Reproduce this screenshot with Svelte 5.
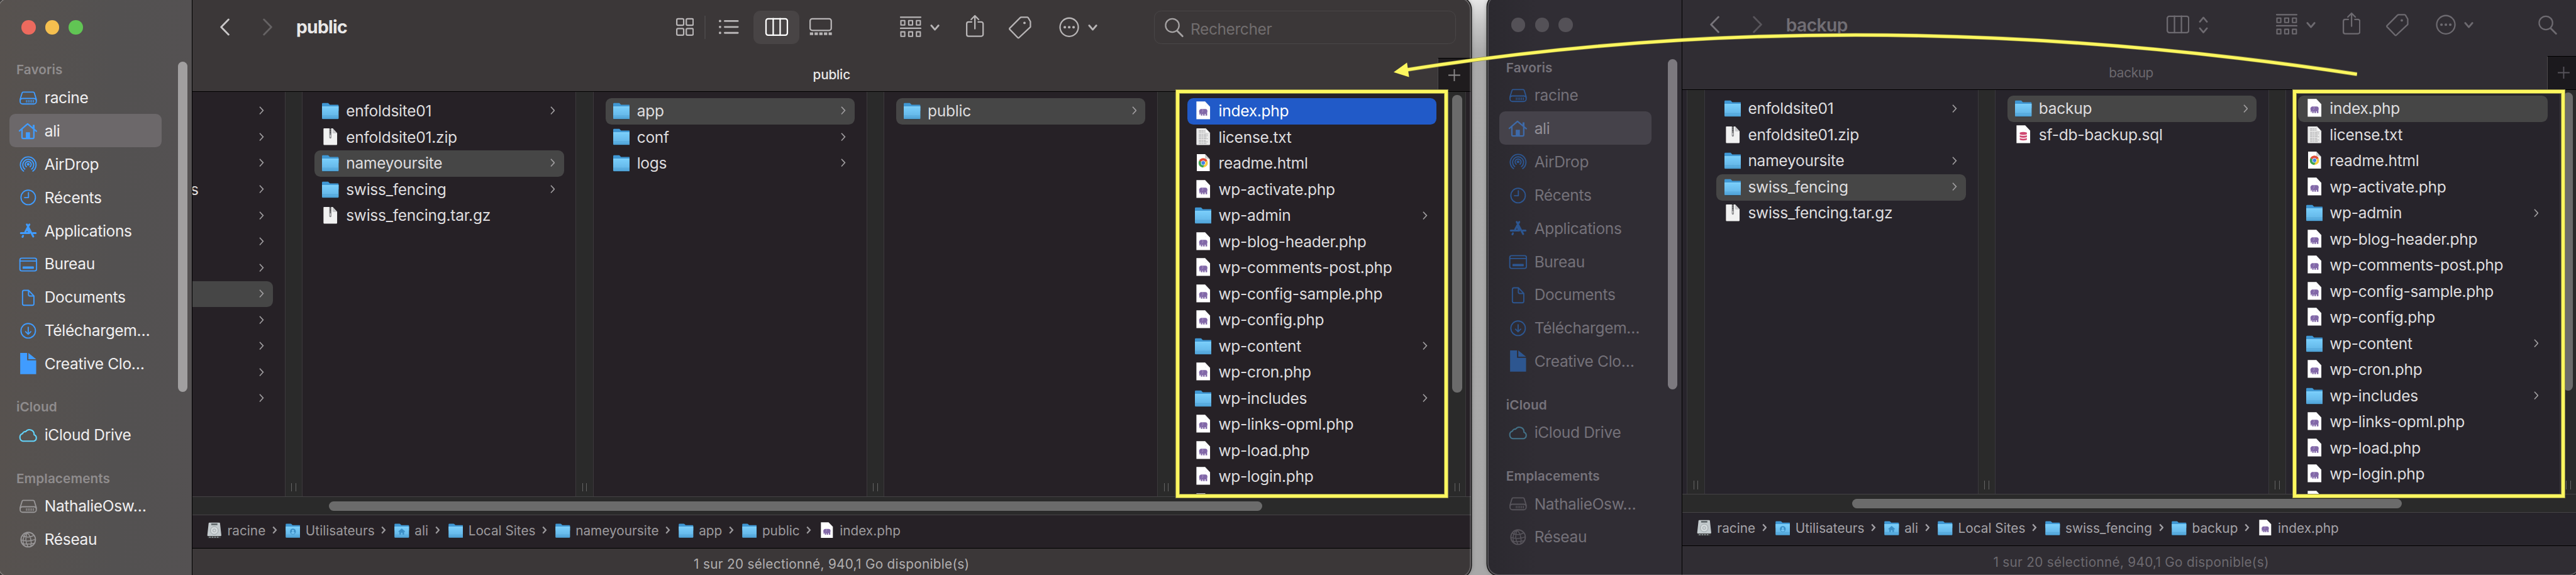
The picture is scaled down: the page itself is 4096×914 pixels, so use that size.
<script>
  const favorites = [
    ['drive', 'racine'],
    ['home', 'ali'],
    ['airdrop', 'AirDrop'],
    ['clock', 'Récents'],
    ['apps', 'Applications'],
    ['desktop', 'Bureau'],
    ['doc', 'Documents'],
    ['download', 'Téléchargem…'],
    ['solid', 'Creative Clo…'],
  ];
  const sections = [
    { title: 'Favoris', items: favorites },
    { title: 'iCloud', items: [['cloud', 'iCloud Drive']] },
    { title: 'Emplacements', items: [['drive', 'NathalieOsw…'], ['globe', 'Réseau']], muted: true },
  ];

  const wordpress = [
    ['php', 'index.php'],
    ['txt', 'license.txt'],
    ['html', 'readme.html'],
    ['php', 'wp-activate.php'],
    ['folder', 'wp-admin'],
    ['php', 'wp-blog-header.php'],
    ['php', 'wp-comments-post.php'],
    ['php', 'wp-config-sample.php'],
    ['php', 'wp-config.php'],
    ['folder', 'wp-content'],
    ['php', 'wp-cron.php'],
    ['folder', 'wp-includes'],
    ['php', 'wp-links-opml.php'],
    ['php', 'wp-load.php'],
    ['php', 'wp-login.php'],
    ['php', ''],
  ];
  const sites = [
    ['folder', 'enfoldsite01'],
    ['zip', 'enfoldsite01.zip'],
    ['folder', 'nameyoursite'],
    ['folder', 'swiss_fencing'],
    ['zip', 'swiss_fencing.tar.gz'],
  ];
  const home = Array.from({ length: 12 }, (_, i) => ['bare', i === 3 ? 's' : '']);

  const pathTo = (...rest) => [
    ['disk', 'racine'],
    ['users', 'Utilisateurs'],
    ['homefolder', 'ali'],
    ['folder', 'Local Sites'],
    ...rest.map((name) => ['folder', name]),
    ['php', 'index.php'],
  ];

  // Toolbar entries: glyph, width, space before it
  const windows = [
    {
      kind: 'front',
      title: 'public',
      tools: [
        ['grid', 30, 0], ['rule', 2, 18], ['list', 34, 22], ['columns', 78, 24], ['gallery', 38, 17],
        ['group', 36, 114], ['down', 16, 15], ['share', 30, 45], ['tag', 38, 42], ['more', 34, 47], ['down', 16, 14],
        ['field', 508, 96],
      ],
      columns: [
        { items: home, sel: 7 },
        { items: sites, sel: 2 },
        { items: [['folder', 'app'], ['folder', 'conf'], ['folder', 'logs']], sel: 0 },
        { items: [['folder', 'public']], sel: 0 },
        { items: wordpress, sel: 0, active: true },
      ],
      path: pathTo('nameyoursite', 'app', 'public'),
    },
    {
      kind: 'back',
      title: 'backup',
      tools: [
        ['columns', 38, 0], ['updown', 16, 16], ['group', 36, 115], ['down', 16, 15], ['share', 30, 45],
        ['tag', 38, 43], ['more', 34, 46], ['down', 16, 14], ['search', 32, 109],
      ],
      columns: [
        { items: [], sel: -1 },
        { items: sites, sel: 3 },
        { items: [['folder', 'backup'], ['sql', 'sf-db-backup.sql']], sel: 0 },
        { items: wordpress, sel: 0 },
      ],
      path: pathTo('swiss_fencing', 'backup'),
    },
  ];
  const opens = (kind) => kind === 'folder' || kind === 'bare';
</script>

{#snippet side(name)}
  <svg class="side-icon" width="40" height="40" viewBox="0 0 40 40" fill="none" stroke="currentColor" stroke-width="2" stroke-linecap="round" stroke-linejoin="round">
    {#if name === 'drive'}
      <path d="M11.5 11h17a2 2 0 0 1 1.8 1.4L33.6 23v4a4 4 0 0 1-4 4H10.400a4 4 0 0 1-4-4v-4L9.700 12.400a2 2 0 0 1 1.8-1.400Z" />
      <path d="M6.500 24.500a4 3.500 0 0 1 4-2.800h19a4 3.500 0 0 1 4 2.800" />
      <path stroke-width="1.400" stroke-linecap="butt" d="M17 24.500v4M20 24.500v4M23 24.500v4M26 24.500v4M29 24.500v4" />
    {:else if name === 'home'}
      <path stroke-width="2.400" d="M5.200 20.200 19 8.400l14.800 12.300M9.500 18v13a2 2 0 0 0 2 2h16a2 2 0 0 0 2-2V18" />
      <path fill="currentColor" stroke="none" d="M16 22.500h7V33h-7ZM27.500 10h3.200v8l-3.200-2.800Z" />
    {:else if name === 'airdrop'}
      <circle cx="20" cy="20.300" r="2.300" fill="currentColor" stroke="none" />
      <path d="M16.800 24.400a5 5 0 1 1 6.400 0M14.200 28.300a9.200 9.200 0 1 1 11.600 0M12.200 31.700a13.200 13.200 0 1 1 15.600 0" />
    {:else if name === 'clock'}
      <circle cx="20" cy="21" r="12.200" />
      <path d="M20.400 13v8.300h-6.600" />
    {:else if name === 'apps'}
      <path stroke-width="3.200" d="M17.700 10.300l10.800 20.400M22 10.300 15 23M7.600 24.800h14.200M28 24.800h4.500M11.300 29.500l-.9 1.800" />
      <path fill="currentColor" stroke="none" d="m18.300 14 6 11H20l-3.600-7.400z" />
    {:else if name === 'desktop'}
      <rect x="6" y="11" width="28" height="21.500" rx="3" />
      <path d="M6 15.800h28" />
      <rect x="10.500" y="25" width="19" height="4" rx="1" fill="currentColor" stroke="none" />
    {:else if name === 'doc'}
      <path d="M20.500 9H13a2.600 2.600 0 0 0-2.600 2.600v20A2.600 2.600 0 0 0 13 34.200h14a2.600 2.600 0 0 0 2.600-2.600V18.500ZM20.500 9v7.500a2 2 0 0 0 2 2h7" />
    {:else if name === 'download'}
      <circle cx="20" cy="21" r="12.200" />
      <path d="M20 15v11.600M15.600 22.400l4.400 4.400 4.400-4.400" />
    {:else if name === 'solid'}
      <path fill="currentColor" stroke="none" d="M6.500 2h11.700v12.600h15.200V38H6.500ZM20.300 2.200 33.400 12.700H20.300Z" />
    {:else if name === 'cloud'}
      <path stroke-width="2.200" d="M11 31a6 6.500 0 0 1-.5-12.700 4.400 4.400 0 0 1 5.200-3.200 7.800 7.800 0 0 1 14.200 5A5.700 5.700 0 0 1 29.300 31Z" />
    {:else if name === 'globe'}
      <circle cx="20" cy="21" r="12.200" />
      <path stroke-width="1.600" d="M18.300 9c-3 7-3 16 1.300 24M18.300 9c5.200 5 8 14 6.200 23M18.300 9c-6 4-8.500 12-5.600 21.500M10.300 14.500c6 3 13 3 19.800-1M8 21.500c8 2.400 17 2 24-1M10 28c7 .8 14 .6 20.500-1" />
    {/if}
  </svg>
{/snippet}

{#snippet file(name)}
  <svg class="file-icon" width="28" height="32" viewBox="0 0 28 32">
    {#if name === 'folder' || name === 'users' || name === 'homefolder'}
      <path fill="#101014" opacity=".4" d="M1 12h26v17.500a1.500 1.500 0 0 1-1.500 1.500h-23A1.500 1.500 0 0 1 1 29.500Z" />
      <path fill="#3f97d3" d="M0 4.500A1.500 1.500 0 0 1 1.500 3H9.500c1 0 1.500.4 2.200 1.200l1.500 1.600h13.300A1.500 1.500 0 0 1 28 7.300V16H0Z" />
      <path fill="url(#folder)" d="M0 9h28v19.500a1.500 1.500 0 0 1-1.500 1.500h-25A1.500 1.500 0 0 1 0 28.500Z" />
      <path stroke="#8cd7fb" stroke-width="1" d="M0 9.300h28" />
      <path stroke="#4a9dd0" stroke-width=".8" d="M0 24.700h28M0 27.500h28" opacity=".8" />
      {#if name === 'users'}
        <circle cx="14" cy="18" r="5.600" fill="#3c8fc6" />
        <circle cx="14" cy="16.500" r="2" fill="#74c5f4" /><path fill="#74c5f4" d="M10.600 21.500a3.400 3 0 0 1 6.800 0q-3.400 2.600-6.800 0Z" />
      {:else if name === 'homefolder'}
        <path fill="#3c8fc6" d="m14 12 6.500 6-1 1-1-.8V24h-3v-3.600h-3V24h-3v-5.800l-1 .8-1-1Z" />
      {/if}
    {:else if name === 'disk'}
      <path fill="#3b3b3d" d="M1.500 25h25v4.500a1.500 1.500 0 0 1-1.500 1.500H3a1.500 1.500 0 0 1-1.500-1.500Z" />
      <path fill="#c4cbce" d="M4.500 1h19a1.500 1.500 0 0 1 1.500 1.300L27.500 25a1.500 1.500 0 0 1-1.500 1.700H2A1.500 1.500 0 0 1 .500 25L3 2.300A1.500 1.500 0 0 1 4.500 1Z" />
      <path fill="#5e6568" d="M8 2.500h12v3.200H8Z" />
      <circle cx="14" cy="16" r="7.500" fill="#d3d9db" stroke="#929a9e" />
      <circle cx="14" cy="16" r="2.800" fill="none" stroke="#929a9e" />
      <path fill="#8f979b" d="M4 28h3v2H4ZM9 28h3v2H9ZM14 28h3v2h-3ZM19 28h3v2h-3Z" />
    {:else if name === 'zip'}
      <path fill="#f1f1f1" d="M3.500 2H18l7.500 8v19a1.300 1.300 0 0 1-1.300 1.300H3.800A1.300 1.300 0 0 1 2.500 29V3a1 1 0 0 1 1-1Z" />
      <path fill="#c9c9cb" d="M17.800 2v7a1.500 1.500 0 0 0 1.500 1.500h6.200Z" />
      <path fill="#8a8a8d" d="M12.300 2h3.600v15.500a1.800 1.800 0 0 1-3.600 0Z" />
      <path stroke="#333335" stroke-width="1.800" stroke-dasharray="1.600 1.400" d="M14.100 2v10" />
      <path stroke="#dadadb" stroke-width="1.200" d="M14.100 13v4" />
    {:else if name === 'txt'}
      <path fill="#eaeaea" d="M3.500 2H18l7.500 8v19a1.300 1.300 0 0 1-1.300 1.300H3.800A1.300 1.300 0 0 1 2.500 29V3a1 1 0 0 1 1-1Z" />
      <path fill="#fff" stroke="#bdbdbd" stroke-width=".6" d="M18 2v8h7.500Z" />
      <path stroke="#a3a3a5" stroke-width="1.100" stroke-dasharray="4 .7 2.500 .8 5 .6" d="M6.500 6h10M6.500 8.500h10M6.500 12h15M6.500 14.500h15M6.500 17h13M6.500 19.500h15M6.500 22.500h12M6.500 25h15M6.500 27.500h13" />
    {:else if name === 'html'}
      <path fill="#fefefe" d="M3.200 1H17l8 8.500V29.800H3.200Z" />
      <path fill="#cfcfcf" d="M17 1v7.500l8 1Z" />
      <circle cx="14" cy="15.800" r="7.800" fill="#f7cb3e" />
      <path fill="#de4b3c" d="M14 15.800 7.200 11.900a7.800 7.800 0 0 1 13.600 0Z" />
      <path fill="#3ea455" d="M14 15.800 7.200 11.900a7.800 7.800 0 0 0 6.300 11.700l3.400-6Z" />
      <circle cx="14" cy="15.800" r="3.800" fill="#fff" /><circle cx="14" cy="15.800" r="3" fill="#4080e8" />
    {:else}
      <path fill="#fff" d="M2.500.300H17l8.500 8.900V30.200h-23Z" />
      <path fill="#cdcdcf" d="M17 .300c.9 2.400.8 5 .4 8.100 3-.5 6-.2 8.100.8Z" />
      <path fill="#fff" d="M16.500.300 25.300 9.200l-8-1.200Z" />
      {#if name === 'sql'}
        <path fill="#d14a73" d="M8 12.500q6-2.400 12 0v3q-6 2-12 0ZM8 17q6 2 12 0v3.200q-6 2-12 0ZM8 21.700q6 2 12 0v3q-6 2.200-12 0Z" />
      {:else}
        <path fill="#8268a8" d="M7.200 18c-.5-3 1.300-5 4-5h6.300c2.700 0 3.700 1.700 3.600 4.300l-.5 1.900v5h-2.700v-3h-1.400v3h-2.700v-2.700h-1.200v2.700h-2.400l-.3-3.500c-1-.2-1 .8-.8 2H7.800Z" />
        <path stroke="#c3b4d6" stroke-width=".6" fill="none" d="M13 13.200q1.600 3-1 5.600" />
      {/if}
    {/if}
  </svg>
{/snippet}

{#snippet glyph(name, w)}
  <svg class="glyph" width={w} height="44" viewBox="0 0 {w} 44" fill="none" stroke="currentColor" stroke-width="2.400" stroke-linecap="round" stroke-linejoin="round">
    {#if name === 'prev'}
      <path stroke-width="3" d="M14.200 8.500 1.800 21.200l12.400 12.700" />
    {:else if name === 'next'}
      <path stroke-width="3" d="M1.800 8.500l12.400 12.700L1.800 33.900" />
    {:else if name === 'grid'}
      <path d="M3.200 7.200h7.600q2 0 2 2v7q0 2-2 2H3.200q-2 0-2-2v-7q0-2 2-2ZM19.200 7.200h7.600q2 0 2 2v7q0 2-2 2h-7.600q-2 0-2-2v-7q0-2 2-2ZM3.200 23.800h7.600q2 0 2 2v7q0 2-2 2H3.200q-2 0-2-2v-7q0-2 2-2ZM19.200 23.800h7.600q2 0 2 2v7q0 2-2 2h-7.600q-2 0-2-2v-7q0-2 2-2Z" />
    {:else if name === 'list'}
      <path stroke-width="3" d="M10 11h22M10 21h22M10 31h22" />
      <path stroke-width="4" d="M2 11h.1M2 21h.1M2 31h.1" />
    {:else if name === 'columns'}
      <g transform="translate({(w - 38) / 2} 0)">
        <rect x="1.200" y="7.200" width="36" height="27.600" rx="3.500" />
        <path d="M13.300 7v28M25 7v28" />
      </g>
    {:else if name === 'gallery'}
      <rect x="1.200" y="7.200" width="35.600" height="19.600" rx="3.500" />
      <path stroke-width="4.600" stroke-linecap="butt" stroke-dasharray="5.600 2.300" d="M.800 32.500h37" />
    {:else if name === 'group'}
      <path d="M1 4.600h34M1 23.300h34" />
      <path stroke-width="2.200" d="M1.600 10.300h6.500v7.500H1.600ZM14.700 10.300h6.500v7.500h-6.500ZM27.800 10.300h6.500v7.500h-6.500ZM1.600 29.300h6.500v7.500H1.600ZM14.700 29.300h6.500v7.500h-6.500ZM27.800 29.300h6.500v7.500h-6.500Z" />
    {:else if name === 'down'}
      <path stroke-width="3" d="M2 18.500l6 7 6-7" />
    {:else if name === 'updown'}
      <path stroke-width="2.800" d="M2 16.500l6-7 6 7M2 27.500l6 7 6-7" />
    {:else if name === 'share'}
      <path d="M9.500 12.700H4.200a3 3 0 0 0-3 3v18a3 3 0 0 0 3 3h21.600a3 3 0 0 0 3-3v-18a3 3 0 0 0-3-3h-5.300M15 24V2.500M8.700 8.500 15 2.200l6.300 6.300" />
    {:else if name === 'tag'}
      <path d="M21 4.600h10.500l1.200.8 3.800 6.500V21L16.800 39.500l-1.200-.1L1.300 24.800V23.500L19.500 5.200Z" />
      <circle cx="26.500" cy="14.200" r="2" fill="currentColor" stroke="none" />
    {:else if name === 'more'}
      <circle cx="17" cy="21.500" r="15.400" />
      <path stroke-width="4.400" d="M9.600 21.500h.1M17 21.500h.1M24.400 21.500h.1" />
    {:else if name === 'search'}
      <circle cx="12.800" cy="18.500" r="11.300" />
      <path stroke-width="3" d="M21 27.500l9 9" />
    {/if}
  </svg>
{/snippet}

<svg class="defs" width="0" height="0">
  <defs>
    <linearGradient id="folder" x1="0" y1="0" x2="0" y2="1">
      <stop offset="0" stop-color="#79cefb" /><stop offset=".7" stop-color="#66b9ea" /><stop offset="1" stop-color="#4fa3d8" />
    </linearGradient>
  </defs>
</svg>

<div class="desk">
  {#each windows as win}
    <section class="window {win.kind}">
      <aside>
        <div class="lights"><i class="red"></i><i class="amber"></i><i class="green"></i></div>
        {#each sections as section}
          <h2>{section.title}</h2>
          <ul class:muted={section.muted}>
            {#each section.items as [icon, label]}
              <li class="place {icon}" class:chosen={label === 'ali'}>{@render side(icon)}<span>{label}</span></li>
            {/each}
          </ul>
        {/each}
        <div class="side-thumb"></div>
      </aside>

      <main>
        <header>
          <div class="toolbar">
            <span class="nav">{@render glyph('prev', 16)}</span>
            <span class="nav off">{@render glyph('next', 16)}</span>
            <h1>{win.title}</h1>
            {#each win.tools as [name, w, gap]}
              <span class="tool {name}" style="width:{w}px;margin-left:{gap}px">
                {#if name === 'field'}
                  {@render glyph('search', 32)}<span>Rechercher</span>
                {:else if name !== 'rule'}
                  {@render glyph(name, w)}
                {/if}
              </span>
            {/each}
          </div>
          <div class="tab">{win.title}</div>
          <div class="plus"><svg width="20" height="20" viewBox="0 0 20 20" stroke="currentColor" stroke-width="2"><path d="M10 0v20M0 10h20" /></svg></div>
        </header>

        <div class="columns">
          {#each win.columns as column, c}
            <ol class="column" class:cut={c === 0}>
              {#each column.items as [kind, label], i}
                <li class={kind} class:sel={i === column.sel} class:active={column.active && i === column.sel}>
                  {#if kind !== 'bare'}{@render file(kind)}{/if}
                  <span>{label}</span>
                  {#if opens(kind)}
                    <svg class="chev" width="8" height="14" viewBox="0 0 8 14" fill="none" stroke="currentColor" stroke-width="1.700"><path d="M1 .800 6.800 7 1 13.200" /></svg>
                  {/if}
                </li>
              {/each}
            </ol>
            <div class="gutter">
              {#if c === win.columns.length - 1}<div class="thumb"></div>{/if}
              <div class="grip"></div>
            </div>
          {/each}
          <div class="rest"></div>
        </div>

        <div class="hscroll"><div></div></div>

        <nav>
          {#each win.path as [kind, label], i}
            {#if i}<svg class="sep" width="8" height="14" viewBox="0 0 8 14" fill="none" stroke="currentColor" stroke-width="2.400"><path d="M1.300 1.500 6.300 7l-5 5.500" /></svg>{/if}
            <span class="crumb">{@render file(kind)}<span>{label}</span></span>
          {/each}
        </nav>
        <footer>1 sur 20 sélectionné, 940,1 Go disponible(s)</footer>
      </main>
    </section>
  {/each}

  <div class="mark one"></div>
  <div class="mark two"></div>
  <svg class="arrow" width="4340" height="968" viewBox="0 0 4340 968" fill="none">
    <path stroke="#8f8c45" stroke-width="6.800" d="M2371 117.500Q3129-3.200 3971 125" />
    <path stroke="#fdf75f" stroke-width="5" d="M2371 117.500Q3129-3.200 3971 125" />
    <path fill="#fdf75f" d="M2348 121.500 2370.500 105.500 2374 129.700Z" />
  </svg>
</div>

<style>
  :global(body) { overflow: hidden; background: #ababab; }
  .defs { position: absolute; }
  .desk {
    position: relative; width: 4340px; height: 969px; overflow: hidden; zoom: 0.943779;
    background: linear-gradient(#e6e6e6, #c6c6c6 40px, #aaaaaa 90px, #a8a8a8);
    font-family: Inter, "Liberation Sans", sans-serif;
  }
  h1, h2, ul, ol { margin: 0; padding: 0; list-style: none; }
  svg { flex: none; display: block; }

  .window {
    position: absolute; left: -4px; top: -4px; width: 2482px; height: 977px; box-sizing: border-box;
    padding: 4px 0 0 4px; border-radius: 20px; overflow: hidden; display: grid; grid-template-columns: 324px 1fr;
    background: #545152; box-shadow: 0 0 0 1.500px #161616, 0 0 8px rgba(0, 0, 0, .35);
    --side-bg: linear-gradient(90deg, #57524f, #535151 60%, #545152);
    --side-text: #f0eff0; --head: #8f8c8d; --icon: #409cff; --cloud: #63d4fb; --gray: #989697;
    --bar: #3b3738; --body: #262126; --fg: #b8b5b6; --chosen: #6c686a; --side-thumb: #a19fa0;
    --line: #3c393c; --plus: #1f1c1e;
  }
  .window::after {
    content: ""; position: absolute; inset: 0; border-radius: 20px;
    box-shadow: inset 0 0 0 2px rgba(255, 255, 255, .22);
  }
  .window.back {
    left: 2506px; top: -8px; width: 1841px; background: #302d33;
    --side-bg: linear-gradient(90deg, #2b292f, #302d34 25%);
    --side-text: #747179; --head: #75727a; --icon: #2d5690; --cloud: #447288; --gray: #57545b;
    --bar: #302d33; --body: #27242b; --fg: #6d6a70; --chosen: #45424a; --side-thumb: #7c797f;
    --line: #3a383e; --plus: #1b191d;
  }

  aside { position: relative; border-right: 2px solid #000; background: var(--side-bg); margin: -4px 0 0 -4px; padding: 4px 0 0 4px; }
  .lights { display: flex; gap: 16px; padding: 34px 0 42px 36px; }
  .lights i { width: 24px; height: 24px; border-radius: 50%; background: #545157; }
  .front .red { background: #ed6a5e; }
  .front .amber { background: #f5bf4f; }
  .front .green { background: #61c554; }
  h2 { height: 36px; line-height: 37px; padding-left: 27.500px; font-size: 22px; font-weight: 600; letter-spacing: .08px; color: var(--head); }
  ul + h2 { margin-top: 28px; }
  .place {
    display: flex; align-items: center; gap: 7px; height: 56px; margin-left: 16px; padding-left: 12px; width: 244px;
    border-radius: 10px; font-size: 26px; letter-spacing: -.35px; color: var(--side-text); white-space: nowrap;
  }
  .place span { padding-top: 1px; }
  .chosen { background: var(--chosen); }
  .back .chosen { color: #918e96; }
  .back .chosen .side-icon { color: #3e6aa8; }
  .side-icon { color: var(--icon); }
  .cloud .side-icon { color: var(--cloud); }
  .muted .side-icon { color: var(--gray); }
  .side-thumb { position: absolute; left: 304px; top: 108px; width: 16px; height: 556px; border-radius: 8px; background: var(--side-thumb); }

  main { display: grid; grid-template-rows: 154px 682px 32px 56px 1fr; min-width: 0; margin-top: -4px; padding-top: 4px; background: var(--bar); }
  header { display: grid; grid-template: 98px 56px / 1fr 56px; background: var(--bar); }
  .toolbar { grid-column: 1 / 3; display: flex; align-items: center; height: 92px; padding-left: 47px; color: var(--fg); }
  .toolbar > * { flex: none; }
  .nav { width: 16px; margin-right: 56px; color: #c9c7c8; }
  .off { margin-right: 40px; color: #656263; }
  .back .nav { color: #77747a; }
  .back .off { color: #58555b; }
  h1 { width: 640px; font-size: 30px; font-weight: 700; letter-spacing: -.74px; color: #e9e8e8; }
  .back h1 { width: 641px; color: #716e74; font-weight: 600; letter-spacing: -.65px; }
  .rule { height: 40px; background: #484546; }
  .front .tool.columns { height: 56px; border-radius: 12px; background: #484445; color: #fff; display: flex; align-items: center; }
  .field { display: flex; align-items: center; gap: 11px; height: 56px; padding-left: 17px; box-sizing: border-box; border: 2px solid #494647; border-radius: 12px; color: #a5a2a3; }
  .field span { font-size: 26px; letter-spacing: -.44px; color: #716d6e; padding-top: 5px; }
  .tab { grid-column: 1 / 3; grid-row: 2; text-align: center; line-height: 57px; font-size: 22px; font-weight: 500; letter-spacing: -.2px; color: #e9e8e8; }
  .back .tab { color: #6b686e; font-weight: 400; letter-spacing: -.36px; }
  .plus { grid-column: 2; grid-row: 2; display: grid; place-items: center; background: var(--plus); border-top: 1.500px solid #000; border-left: 1.500px solid #4c494b; box-sizing: border-box; color: #8b898a; }
  .back .plus { color: #56535a; }

  .columns { display: flex; min-width: 0; overflow: hidden; }
  main > .columns { border-top: 1.500px solid #000; box-sizing: border-box; background: var(--body); }
  .column { flex: none; width: 460px; box-sizing: border-box; padding: 10.500px 20px 0; overflow: hidden; }
  .column.cut { width: 156px; padding-left: 0; }
  .back .column.cut { width: 8px; padding: 0; }
  .column li {
    display: flex; align-items: center; height: 44px; box-sizing: border-box; padding: 0 15px 2px 13px; gap: 12px; border-radius: 10px;
    font-size: 26px; letter-spacing: -.27px; color: #dedddf; white-space: nowrap;
  }
  .column li.bare { padding-left: 0; border-radius: 0 10px 10px 0; }
  .column li.bare span { margin-left: -3px; }
  .column li.sel { background: #464646; }
  .column li.active { background: #215ac8; color: #fff; }
  .chev { margin-left: auto; color: #a09ea0; }
  .gutter { position: relative; flex: none; width: 30px; box-sizing: border-box; background: #2a2a2a; border: solid var(--line); border-width: 0 1px; display: flex; justify-content: center; align-items: flex-end; }
  .grip { width: 6px; height: 14px; margin-bottom: 8px; border: solid #646464; border-width: 0 2px; }
  .thumb { position: absolute; left: 6px; top: 4.500px; width: 16px; height: 502px; border-radius: 8px; background: #6b6b6b; }
  .rest { flex: 1; }

  .hscroll { box-sizing: border-box; border-top: 1px solid #444345; border-bottom: 2px solid #454346; background: #2a2a2a; padding: 7px 0 0 230px; }
  .hscroll div { width: 1573px; height: 16px; border-radius: 8px; background: #6b6b6b; }
  .back .hscroll { padding-left: 286px; }
  .back .hscroll div { width: 927px; }

  nav { display: flex; align-items: center; box-sizing: border-box; padding: 0 0 5px 25px; border-bottom: 1.500px solid #000; background: var(--body); font-size: 22px; letter-spacing: .02px; color: #9c9a9d; white-space: nowrap; }
  .back nav { color: #a5a3a8; }
  .crumb { display: flex; align-items: center; gap: 9px; }
  .crumb > span { padding-top: 1px; }
  .crumb :global(.file-icon) { width: 25px; height: 28px; }
  .sep { margin: 0 14px 0 11.400px; }
  footer { text-align: center; padding-top: 13px; font-size: 22px; line-height: 28px; letter-spacing: .31px; color: #b1afb0; }
  .back footer { color: #6c696f; }

  .mark { position: absolute; left: 1981px; top: 151px; width: 458px; height: 687px; box-sizing: border-box; border: 5.500px solid #fdf75f; outline: 1px solid #8f8c45; outline-offset: -1px; box-shadow: inset 0 0 0 1px #8f8c45; }
  .mark.two { left: 3863px; }
  .arrow { position: absolute; left: 0; top: 0; }
</style>
